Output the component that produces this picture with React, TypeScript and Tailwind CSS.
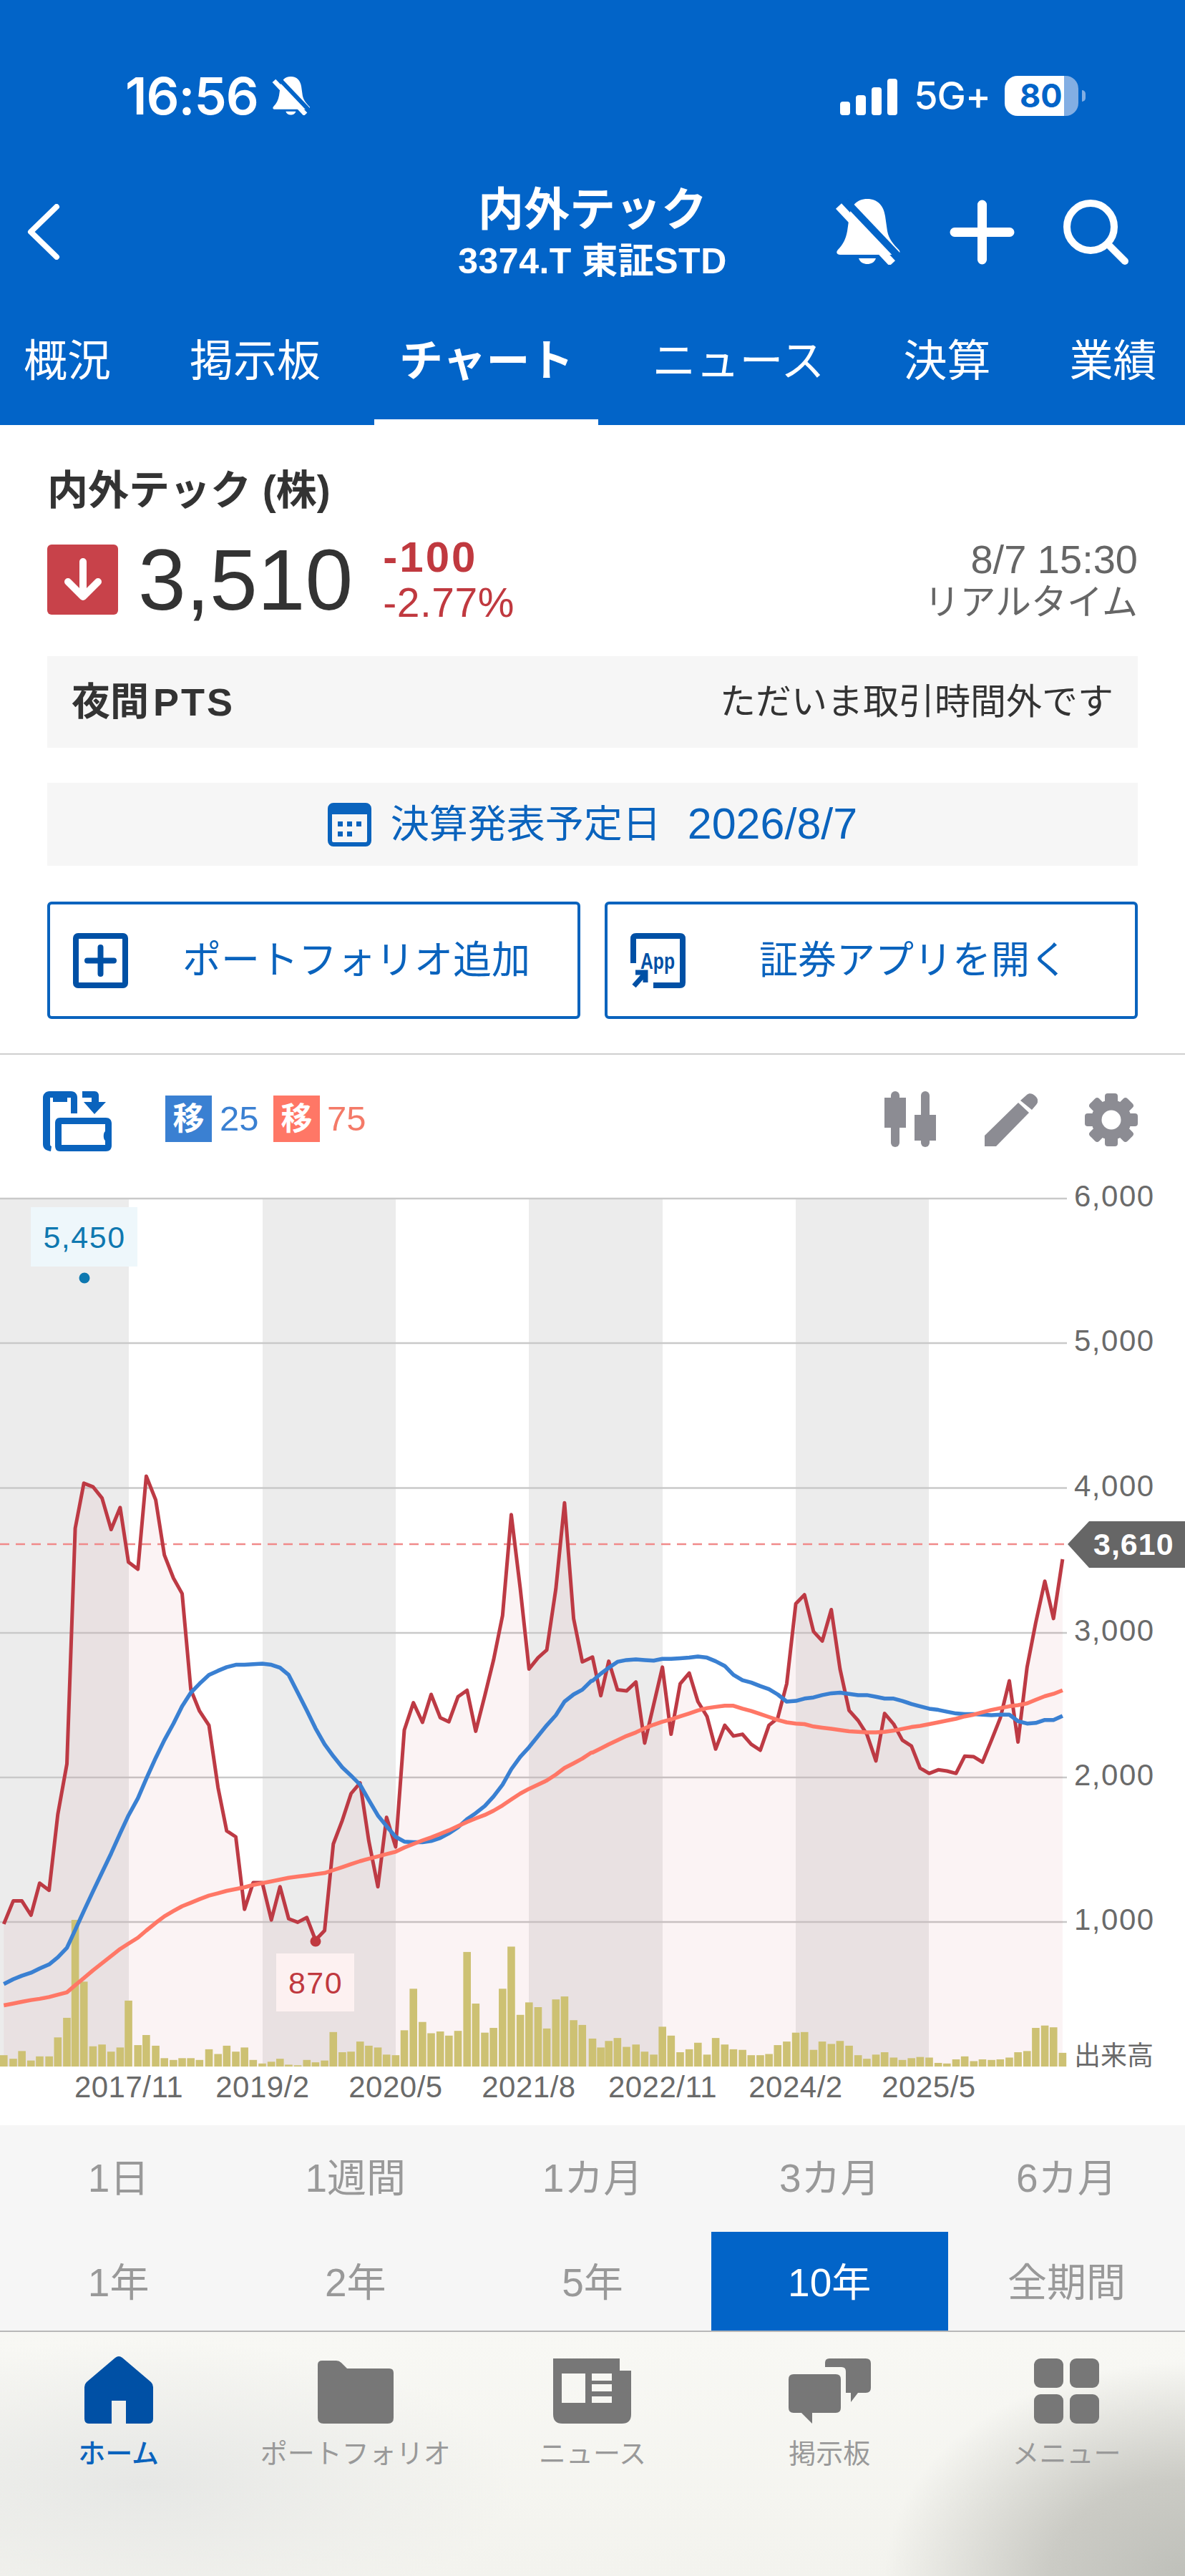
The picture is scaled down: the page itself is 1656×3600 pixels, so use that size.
import React from 'react';

// chart data was read from crops, so it stays in crop coordinates and is converted below
const leftX = (z: number) => z / 1.8937;
const rightX = (z: number) => 828 + z / 1.8937;
const toY = (z: number) => 1640 + z / 1.206;

type Pt = [number, number];

const redLeft: Pt[] = [[10,1265],[35,1226],[58,1226],[82,1250],[105,1196],[130,1208],[153,1080],[177,995],[199,598],[222,522],[246,528],[270,547],[294,600],[318,563],[340,655],[365,667],[387,510],[412,550],[435,643],[459,682],[482,708],[505,870],[528,906],[553,930],[577,1035],[600,1108],[624,1118],[647,1240],[670,1195],[694,1195],[718,1258],[741,1202],[764,1256],[788,1262],[812,1254],[835,1292],[859,1276],[882,1130],[906,1090],[929,1045],[953,1027],[976,1125],[1000,1202],[1023,1085],[1047,1135],[1070,938],[1094,892],[1118,925],[1141,878],[1165,917],[1188,924],[1212,882],[1236,871],[1259,940],[1283,880],[1306,820],[1330,745],[1353,575],[1377,700],[1400,835],[1424,816],[1447,803],[1471,700],[1494,555],[1518,750],[1541,823],[1565,816]];
const redRight: Pt[] = [[0,815],[22,880],[43,822],[66,870],[90,872],[115,857],[138,960],[162,895],[185,832],[208,945],[232,860],[256,842],[279,890],[303,915],[326,970],[350,930],[373,948],[397,945],[420,962],[444,972],[467,930],[490,918],[514,860],[538,725],[561,710],[585,772],[608,788],[632,735],[655,835],[679,905],[703,922],[726,945],[750,990],[773,910],[797,928],[820,955],[844,965],[867,1002],[891,1011],[915,1005],[938,1007],[962,1011],[985,982],[1009,983],[1032,992],[1056,955],[1079,918],[1103,855],[1126,958],[1150,832],[1173,757],[1197,687],[1220,750],[1244,650]];
const blueLeft: Pt[] = [[10,1366],[35,1358],[58,1352],[82,1347],[105,1340],[130,1333],[153,1321],[177,1305],[199,1275],[222,1243],[246,1210],[270,1178],[294,1146],[318,1112],[340,1082],[365,1053],[387,1020],[412,985],[435,955],[459,927],[482,898],[505,875],[528,860],[553,845],[577,838],[600,832],[624,828],[647,828],[670,827],[694,826],[718,828],[741,833],[764,845],[788,875],[812,905],[835,935],[859,962],[882,982],[906,1001],[929,1015],[953,1030],[976,1056],[1000,1082],[1023,1100],[1047,1118],[1070,1126],[1094,1127],[1118,1127],[1141,1125],[1165,1120],[1188,1112],[1212,1102],[1236,1088],[1259,1078],[1283,1066],[1306,1050],[1330,1030],[1353,1004],[1377,983],[1400,967],[1424,948],[1447,930],[1471,913],[1494,890],[1518,878],[1541,870],[1565,855]];
const blueRight: Pt[] = [[0,855],[22,843],[43,833],[66,823],[90,820],[115,819],[138,820],[162,821],[185,818],[208,818],[232,817],[256,816],[279,814],[303,816],[326,822],[350,830],[373,845],[397,854],[420,858],[444,864],[467,869],[490,878],[514,890],[538,889],[561,885],[585,883],[608,879],[632,876],[655,875],[679,877],[703,879],[726,879],[750,882],[773,885],[797,885],[820,889],[844,894],[867,898],[891,902],[915,904],[938,907],[962,910],[985,911],[1009,911],[1032,912],[1056,913],[1079,912],[1103,912],[1126,923],[1150,927],[1173,926],[1197,921],[1220,921],[1244,914]];
const orangeLeft: Pt[] = [[10,1402],[35,1399],[58,1396],[82,1393],[105,1391],[130,1388],[153,1384],[177,1380],[199,1368],[222,1356],[246,1343],[270,1331],[294,1319],[318,1307],[340,1298],[365,1288],[387,1276],[412,1263],[435,1252],[459,1243],[482,1235],[505,1229],[528,1223],[553,1217],[577,1213],[600,1209],[624,1206],[647,1203],[670,1199],[694,1196],[718,1193],[741,1190],[764,1187],[788,1185],[812,1183],[835,1181],[859,1179],[882,1174],[906,1169],[929,1164],[953,1159],[976,1155],[1000,1151],[1023,1147],[1047,1143],[1070,1136],[1094,1130],[1118,1124],[1141,1119],[1165,1113],[1188,1107],[1212,1100],[1236,1093],[1259,1087],[1283,1081],[1306,1074],[1330,1065],[1353,1055],[1377,1045],[1400,1037],[1424,1030],[1447,1023],[1471,1013],[1494,1002],[1518,994],[1541,986],[1565,976]];
const orangeRight: Pt[] = [[0,976],[22,969],[43,962],[66,955],[90,948],[115,942],[138,935],[162,929],[185,924],[208,920],[232,915],[256,910],[279,905],[303,901],[326,899],[350,897],[373,897],[397,902],[420,906],[444,911],[467,916],[490,921],[514,925],[538,927],[561,928],[585,932],[608,934],[632,936],[655,938],[679,940],[703,941],[726,942],[750,942],[773,941],[797,939],[820,936],[844,933],[867,931],[891,928],[915,925],[938,922],[962,919],[985,915],[1009,912],[1032,908],[1056,904],[1079,901],[1103,898],[1126,896],[1150,893],[1173,887],[1197,881],[1220,877],[1244,871]];
const volLeft: Pt[] = [[10,1486],[35,1492],[58,1479],[82,1495],[105,1488],[130,1488],[153,1456],[177,1423],[199,1258],[222,1362],[246,1471],[270,1468],[294,1480],[318,1473],[340,1394],[365,1469],[387,1452],[412,1470],[435,1491],[459,1494],[482,1491],[505,1491],[528,1494],[553,1476],[577,1484],[600,1470],[624,1480],[647,1473],[670,1494],[694,1500],[718,1497],[741,1492],[764,1502],[788,1503],[812,1494],[835,1498],[859,1495],[882,1447],[906,1481],[929,1480],[953,1463],[976,1470],[1000,1473],[1023,1485],[1047,1486],[1070,1444],[1094,1374],[1118,1430],[1141,1449],[1165,1446],[1188,1453],[1212,1445],[1236,1312],[1259,1399],[1283,1448],[1306,1440],[1330,1374],[1353,1303],[1377,1418],[1400,1397],[1424,1405],[1447,1441],[1471,1392],[1494,1387],[1518,1427],[1541,1435]];
const volRight: Pt[] = [[0,1458],[22,1473],[43,1462],[66,1457],[90,1472],[115,1468],[138,1480],[162,1485],[185,1438],[208,1453],[232,1481],[256,1476],[279,1465],[303,1485],[326,1457],[350,1468],[373,1476],[397,1477],[420,1486],[444,1486],[467,1484],[490,1469],[514,1463],[538,1448],[561,1447],[585,1477],[608,1463],[632,1467],[655,1462],[679,1470],[703,1486],[726,1492],[750,1485],[773,1481],[797,1490],[820,1494],[844,1491],[867,1489],[891,1490],[915,1499],[938,1500],[962,1493],[985,1488],[1009,1496],[1032,1493],[1056,1494],[1079,1493],[1103,1490],[1126,1481],[1150,1479],[1173,1440],[1197,1436],[1220,1439],[1244,1482]];

const join = (l: Pt[], r: Pt[]): Pt[] => [
    ...l.map(([x, y]): Pt => [leftX(x), toY(y)]),
    ...r.map(([x, y]): Pt => [rightX(x), toY(y)]),
];
const toPoints = (pts: Pt[]) => pts.map(([x, y]) => `${x.toFixed(1)},${y.toFixed(1)}`).join(' ');

const red = join(redLeft, redRight);
const blue = join(blueLeft, blueRight);
const orange = join(orangeLeft, orangeRight);
const volumes = join(volLeft, volRight);

const gridLines = [
    { y: 1675, label: '6,000' },
    { y: 1877, label: '5,000' },
    { y: 2079.5, label: '4,000' },
    { y: 2282, label: '3,000' },
    { y: 2484, label: '2,000' },
    { y: 2686, label: '1,000' },
];
const bands = [[0, 180], [367, 186], [739, 187], [1112, 186]];
const dates = [[180, '2017/11'], [367, '2019/2'], [553, '2020/5'], [739, '2021/8'], [926, '2022/11'], [1112, '2024/2'], [1298, '2025/5']] as const;

function Chart() {
    return (
        <svg viewBox="0 1640 1656 1330" className="block w-[1656px] h-[1330px] bg-white">
            {bands.map(([x, w]) => (
                <rect key={x} x={x} y={1675} width={w} height={1213} fill="#ececec" />
            ))}
            {gridLines.map((g) => (
                <g key={g.y}>
                    <line x1={0} x2={1491} y1={g.y} y2={g.y} stroke="#c9c9c9" strokeWidth={2.5} />
                    <text x={1501} y={g.y + 11} className="fill-[#6a6a6a] text-[42px] tracking-[1.5px]">{g.label}</text>
                </g>
            ))}
            <polygon
                points={`${red[0][0]},2888 ${toPoints(red)} ${red[red.length - 1][0]},2888`}
                fill="#c0393f"
                fillOpacity={0.06}
            />
            {volumes.map(([x, y], i) => (
                <rect key={i} x={x - 5.3} y={y} width={10.6} height={2888 - y} fill="#cdc173" />
            ))}
            <line x1={0} x2={1491} y1={2158} y2={2158} stroke="#f08a8a" strokeWidth={2.5} strokeDasharray="13 9" />
            <polyline points={toPoints(red)} fill="none" stroke="#bd3a44" strokeWidth={5} strokeLinejoin="round" />
            <polyline points={toPoints(blue)} fill="none" stroke="#3a80d2" strokeWidth={5.5} strokeLinejoin="round" />
            <polyline points={toPoints(orange)} fill="none" stroke="#ff7766" strokeWidth={5.5} strokeLinejoin="round" />

            <rect x={43} y={1687} width={149} height={83} fill="#eef7fb" />
            <text x={118} y={1744} textAnchor="middle" className="fill-[#0e78b0] text-[43px] tracking-[1.5px]">5,450</text>
            <circle cx={118} cy={1786} r={7.5} fill="#0e78b0" />

            <circle cx={441} cy={2713} r={7.5} fill="#c0393f" />
            <rect x={386} y={2730} width={109} height={81} fill="#fdf1f1" />
            <text x={441} y={2786} textAnchor="middle" className="fill-[#c0393f] text-[43px] tracking-[1.5px]">870</text>

            <polygon points="1492,2158 1522,2126 1656,2126 1656,2191 1522,2191" fill="#666666" />
            <text x={1528} y={2173} className="fill-white text-[43px] font-bold tracking-[1px]">3,610</text>

            <text x={1501} y={2886} className="fill-[#6a6a6a] text-[37px]">出来高</text>
            {dates.map(([x, label]) => (
                <text key={label} x={x} y={2931} textAnchor="middle" className="fill-[#6a6a6a] text-[42px] tracking-[0.5px]">{label}</text>
            ))}
        </svg>
    );
}

function MutedBell({ className, gap = '#0264c8' }: { className: string; gap?: string }) {
    return (
        <svg viewBox="0 0 92 92" className={className} fill="#fff">
            <path d="M45 0C60 0 68 10 70 24L73 45C75 56 82 64 89 71C92 74 90 78 86 78H7C2 78 1 74 4 71C11 64 15 56 17 45L20 24C22 10 30 0 45 0Z" />
            <path d="M33 83H57C55 89 50 91 45 91C40 91 35 89 33 83Z" />
            <line x1={15} y1={3} x2={92} y2={84} stroke={gap} strokeWidth={10} />
            <line x1={5} y1={10} x2={80} y2={90} stroke="#fff" strokeWidth={11} />
        </svg>
    );
}

function StatusBar() {
    return (
        <div className="flex items-center justify-between pt-[100px] pl-[175px] pr-[139px] h-[168px] text-white">
            <div className="flex items-center gap-[19px]">
                <span className="font-['Inter',sans-serif] font-semibold text-[72px] leading-[68px] tracking-[-1px]">16:56</span>
                <MutedBell className="w-[54px] h-[54px]" />
            </div>
            <div className="flex items-center">
                <svg viewBox="0 0 80 51" className="w-[80px] h-[51px] mt-[2px]" fill="#fff">
                    <rect x={0} y={32} width={14} height={19} rx={4} />
                    <rect x={22} y={23} width={14} height={28} rx={4} />
                    <rect x={44} y={12} width={14} height={39} rx={4} />
                    <rect x={66} y={0} width={14} height={51} rx={4} />
                </svg>
                <span className="ml-[23px] font-['Inter',sans-serif] font-medium text-[54px] leading-[60px] tracking-[-1px]">5G+</span>
                <div className="ml-[20px] w-[103px] h-[56px] rounded-[18px] bg-[linear-gradient(90deg,#ffffff_81%,#82aee3_81%)] flex items-center pl-[21px]">
                    <span className="font-['Inter',sans-serif] font-bold text-[45px] leading-[56px] text-[#0264c8]">80</span>
                </div>
                <div className="ml-[5px] w-[5px] h-[16px] rounded-r-full bg-[#82aee3]" />
            </div>
        </div>
    );
}

function NavBar() {
    return (
        <div className="grid grid-cols-[1fr_auto_1fr] items-center mt-[90px] text-white">
            <div className="pl-[38px]">
                <svg viewBox="0 0 46 78" className="w-[46px] h-[78px]" fill="none" stroke="#fff" strokeWidth={8} strokeLinecap="round" strokeLinejoin="round">
                    <path d="M41 4L5 39L41 74" />
                </svg>
            </div>
            <div className="flex flex-col items-center">
                <div className="font-semibold text-[64px] leading-[70px]">内外テック</div>
                <div className="mt-[12px] font-bold text-[50px] leading-[50px] tracking-[0.5px]">3374.T 東証STD</div>
            </div>
            <div className="flex items-center justify-end pr-[79px] gap-[68px]">
                <MutedBell className="w-[92px] h-[92px]" />
                <svg viewBox="0 0 91 91" className="w-[91px] h-[91px]" stroke="#fff" strokeWidth={13} strokeLinecap="round">
                    <path d="M45.5 7V84M7 45.5H84" />
                </svg>
                <svg viewBox="0 0 91 91" className="w-[91px] h-[91px]" fill="none" stroke="#fff" strokeWidth={10} strokeLinecap="round">
                    <circle cx={38} cy={38} r={33} />
                    <path d="M62 62L86 86" />
                </svg>
            </div>
        </div>
    );
}

const tabs = ['概況', '掲示板', 'チャート', 'ニュース', '決算', '業績'];

function Tabs() {
    return (
        <div className="flex gap-[40px] mt-[80px] ml-[-2px] text-white whitespace-nowrap">
            {tabs.map((t) => (
                <div
                    key={t}
                    className={`px-[35px] h-[124px] text-[61px] leading-[70px] border-b-[8px] ${t === 'チャート' ? 'border-white font-bold' : 'border-transparent'}`}
                >
                    {t}
                </div>
            ))}
        </div>
    );
}

function Quote() {
    return (
        <div className="px-[66px] pt-[61px] pb-[48px] border-b-2 border-[#cfcfcf]">
            <div className="text-[57px] leading-[60px] font-semibold text-[#333]">内外テック (株)</div>
            <div className="flex items-start h-[98px] mt-[46px]">
                <div className="w-[99px] h-[98px] rounded-[6px] bg-[#c8424a] flex items-center justify-center">
                    <svg viewBox="0 0 54 60" className="w-[54px] h-[60px]" fill="none" stroke="#fff" strokeWidth={10} strokeLinecap="round" strokeLinejoin="round">
                        <path d="M27 5V53M6 33L27 54L48 33" />
                    </svg>
                </div>
                <div className="ml-[28px] text-[120px] leading-[98px] text-[#333]">3,510</div>
                <div className="ml-[42px] mt-[-12px] text-[#c0393f]">
                    <div className="text-[60px] leading-[60px] font-bold tracking-[3px]">-100</div>
                    <div className="mt-[3px] text-[57px] leading-[60px] tracking-[0.5px]">-2.77%</div>
                </div>
                <div className="ml-auto mt-[-10px] text-right text-[#666]">
                    <div className="text-[56px] leading-[61px]">8/7 15:30</div>
                    <div className="text-[50px] leading-[61px]">リアルタイム</div>
                </div>
            </div>
            <div className="mt-[58px] h-[128px] bg-[#f6f6f6] flex items-center justify-between px-[34px] text-[#333]">
                <span className="text-[54px] font-bold">夜間<span className="ml-[6px] tracking-[3px]">PTS</span></span>
                <span className="text-[50px]">ただいま取引時間外です</span>
            </div>
            <div className="mt-[49px] h-[116px] bg-[#f6f6f6] flex items-center justify-center text-[#0a63bd] text-[54px]">
                <svg viewBox="0 0 61 61" className="w-[61px] h-[61px] mr-[27px]" fill="none">
                    <rect x={3} y={3} width={55} height={55} rx={5} stroke="#0a63bd" strokeWidth={6} />
                    <rect x={3} y={3} width={55} height={13} fill="#0a63bd" />
                    <g fill="#0a63bd">
                        <rect x={14} y={26} width={7} height={7} />
                        <rect x={27} y={26} width={7} height={7} />
                        <rect x={40} y={26} width={7} height={7} />
                        <rect x={14} y={40} width={7} height={7} />
                        <rect x={27} y={40} width={7} height={7} />
                    </g>
                </svg>
                <span>決算発表予定日</span>
                <span className="ml-[37px] text-[61px]">2026/8/7</span>
            </div>
            <div className="mt-[50px] grid grid-cols-2 gap-[34px] text-[#0a63bd] text-[54px]">
                <div className="h-[164px] border-4 border-[#0a63bd] rounded-[6px] flex items-center pl-[32px]">
                    <svg viewBox="0 0 77 77" className="w-[77px] h-[77px]" fill="none" stroke="#0050a5">
                        <rect x={4} y={4} width={69} height={69} rx={3} strokeWidth={8} />
                        <path d="M38.5 20V57M20 38.5H57" strokeWidth={8} strokeLinecap="round" />
                    </svg>
                    <span className="ml-[76px]">ポートフォリオ追加</span>
                </div>
                <div className="h-[164px] border-4 border-[#0a63bd] rounded-[6px] flex items-center pl-[32px]">
                    <svg viewBox="0 0 77 77" className="w-[77px] h-[77px]" fill="none" stroke="#0050a5">
                        <path d="M4 42V8Q4 4 8 4H69Q73 4 73 8V69Q73 73 69 73H32" strokeWidth={8} />
                        <path d="M5 74L20 57M7 55H21V69" strokeWidth={7} />
                        <text x={14} y={50} textLength={48} lengthAdjust="spacingAndGlyphs" stroke="none" className="fill-[#0050a5] text-[32px] font-bold">App</text>
                    </svg>
                    <span className="ml-[103px]">証券アプリを開く</span>
                </div>
            </div>
        </div>
    );
}

function Toolbar() {
    return (
        <div className="h-[166px] flex items-start pt-[51px] pl-[60px] pr-[66px]">
            <svg viewBox="0 0 96 84" className="w-[96px] h-[84px]" fill="#0a63bd">
                <path d="M11 84C4 83 0 80 0 74V9C0 4 4 0 9 0H39C45 0 48 4 48 9V31H39V9H34V15H14V9H10V74C10 76 11 77 12 77Z" />
                <path fillRule="evenodd" d="M24 37H88C93 37 96 40 96 45V76C96 81 93 84 88 84H24C19 84 17 81 17 76V45C17 40 19 37 24 37ZM26 46V75H87V69C84 67 84 58 87 56V46Z" />
                <path d="M55 0H72C76 0 78 3 78 6V15H88L72 32L57 15H68V9H55Z" />
            </svg>
            <div className="ml-[75px] mt-[6px] flex items-center">
                <div className="w-[65px] h-[65px] bg-[#3a80d2] text-white font-bold text-[44px] leading-[65px] text-center">移</div>
                <span className="ml-[11px] w-[75px] text-[49px] leading-[65px] text-[#3a80d2]">25</span>
                <div className="w-[65px] h-[65px] bg-[#ff7766] text-white font-bold text-[44px] leading-[65px] text-center">移</div>
                <span className="ml-[10px] text-[49px] leading-[65px] text-[#f47a68]">75</span>
            </div>
            <div className="ml-auto flex items-start">
                <svg viewBox="0 0 72 78" className="w-[72px] h-[78px]" fill="#8c8c93">
                    <rect x={9} y={0} width={12} height={78} rx={6} />
                    <rect x={0} y={9} width={30} height={42} />
                    <rect x={51} y={0} width={12} height={78} rx={6} />
                    <rect x={42} y={33} width={30} height={36} />
                </svg>
                <svg viewBox="0 0 74 74" className="w-[74px] h-[74px] ml-[68px] mt-[3px]" fill="#8c8c93">
                    <path d="M0 59L47 13L62 27L16 74H0Z" />
                    <path d="M50 10L59 2C62 -1 67 0 70 3L72 5C75 8 75 13 72 16L66 23Z" />
                </svg>
                <svg viewBox="0 0 74 74" className="w-[74px] h-[74px] ml-[66px] mt-[3px]" fill="#8c8c93">
                    {[0, 45, 90, 135].map((a) => (
                        <rect key={a} x={28} y={0} width={18} height={74} rx={4} transform={`rotate(${a} 37 37)`} />
                    ))}
                    <circle cx={37} cy={37} r={28} />
                    <circle cx={37} cy={37} r={13.5} fill="#fff" />
                </svg>
            </div>
        </div>
    );
}

const periods = ['1日', '1週間', '1カ月', '3カ月', '6カ月', '1年', '2年', '5年', '10年', '全期間'];

function Periods() {
    return (
        <div className="grid grid-cols-5 grid-rows-[149px_138px] bg-[#f6f6f6] text-[55px] text-[#999] border-b-2 border-[#b9b9b9]">
            {periods.map((p, i) => (
                <div key={p} className={`flex items-center justify-center ${i >= 5 ? 'pt-[5px]' : ''} ${p === '10年' ? 'bg-[#0264c8] text-white' : ''}`}>
                    {p}
                </div>
            ))}
        </div>
    );
}

const navIcons = [
    {
        label: 'ホーム',
        icon: (
            <svg viewBox="0 0 96 95" className="w-[96px] h-[95px]" fill="#0050a5">
                <path d="M43 3Q48 -1 53 3L93 37Q96 40 96 44V88Q96 95 90 95H58V63H38V95H6Q0 95 0 88V44Q0 40 3 37Z" />
            </svg>
        ),
    },
    {
        label: 'ポートフォリオ',
        icon: (
            <svg viewBox="0 0 106 88" className="w-[106px] h-[88px]" fill="#777">
                <path d="M6 0H26Q30 0 33 3L41 11H100Q106 11 106 17V80Q106 88 98 88H8Q0 88 0 80V6Q0 0 6 0Z" />
            </svg>
        ),
    },
    {
        label: 'ニュース',
        icon: (
            <svg viewBox="0 0 109 91" className="w-[109px] h-[91px]" fill="#777">
                <path
                    fillRule="evenodd"
                    d="M0 0H93V17H109V78Q109 91 96 91H13Q0 91 0 78ZM12 21V62H45V21ZM54 21V31H82V21ZM54 36V46H82V36ZM54 53V62H82V53Z"
                />
            </svg>
        ),
    },
    {
        label: '掲示板',
        icon: (
            <svg viewBox="0 0 115 91" className="w-[115px] h-[91px]" fill="#777">
                <path d="M7 22H66Q73 22 73 29V69Q73 76 66 76H33V91L18 76H7Q0 76 0 69V29Q0 22 7 22Z" />
                <path d="M51 6Q51 0 57 0H108Q115 0 115 7V41Q115 48 108 48H97L87 61V48H80V18Q80 12 74 12H51Z" />
            </svg>
        ),
    },
    {
        label: 'メニュー',
        icon: (
            <svg viewBox="0 0 91 91" className="w-[91px] h-[91px]" fill="#777">
                <rect x={0} y={0} width={41} height={41} rx={9} />
                <rect x={50} y={0} width={41} height={41} rx={9} />
                <rect x={0} y={50} width={41} height={41} rx={9} />
                <rect x={50} y={50} width={41} height={41} rx={9} />
            </svg>
        ),
    },
];

function BottomNav() {
    return (
        <div className="grid grid-cols-5 h-[342px] bg-[radial-gradient(ellipse_420px_300px_at_100%_100%,#bfc0ba_0%,#cbcbc5_45%,transparent_100%),radial-gradient(ellipse_520px_200px_at_12%_62%,#e6e7e5,transparent),linear-gradient(#f8f8f4,#f3f3ee)]">
            {navIcons.map((n, i) => (
                <div key={n.label} className="flex flex-col items-center pt-[33px]">
                    <div className="h-[95px] flex items-end">{n.icon}</div>
                    <div className={`mt-[20px] text-[38px] leading-[44px] ${i === 0 ? 'text-[#0a63bd] font-medium' : 'text-[#999]'}`}>
                        {n.label}
                    </div>
                </div>
            ))}
        </div>
    );
}

export default function App() {
    return (
        <div className="w-[1656px] h-[3600px] overflow-hidden bg-white font-['Liberation_Sans','Noto_Sans_CJK_JP',sans-serif]">
            <header className="h-[594px] bg-[#0264c8]">
                <StatusBar />
                <NavBar />
                <Tabs />
            </header>
            <Quote />
            <Toolbar />
            <Chart />
            <Periods />
            <BottomNav />
        </div>
    );
}
